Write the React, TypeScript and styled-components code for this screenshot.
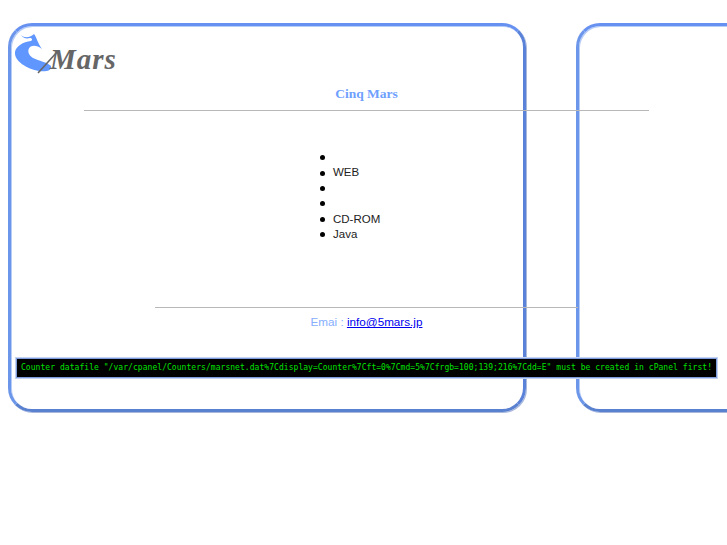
import React from 'react';
import styled, { createGlobalStyle } from 'styled-components';

const GlobalStyle = createGlobalStyle`
  html, body {
    margin: 0;
    background: #fff;
    overflow: hidden;
  }
`;

const Stage = styled.div`
  display: grid;
  grid-template-columns: 733px;
  width: 727px;
  height: 545px;
  overflow: hidden;
`;

const PanelRow = styled.div`
  grid-area: 1 / 1;
  display: flex;
  gap: 50px;
  padding: 23px 0 0 8px;
  min-width: 0;
`;

const Panel = styled.div`
  box-sizing: border-box;
  width: 518px;
  height: 389px;
  flex: none;
  padding: 3px 0 0 2px;
  border-style: solid;
  border-width: 3px;
  border-color: #6791f0 #5a82d8 #5a80d0 #6c96ea;
  border-radius: 24px;
  box-shadow: inset 1px 1px 0 #b6cdf8, 1px 1px 0 #a9b9dc;
`;

const Logo = styled.svg`
  display: block;
  width: 110px;
  height: 50px;
`;

const LogoText = styled.text`
  font-family: 'Liberation Serif', serif;
  font-style: italic;
  font-weight: 700;
  font-size: 29px;
  letter-spacing: 1px;
  fill: #666;
`;

const Content = styled.div`
  grid-area: 1 / 1;
  display: flex;
  flex-direction: column;
  align-items: center;
  padding-top: 86px;
  font-family: 'Liberation Sans', Arial, sans-serif;
`;

const Title = styled.h1`
  margin: 0;
  font-family: 'Liberation Serif', serif;
  font-size: 13.5px;
  line-height: 16px;
  font-weight: 700;
  color: #6f9fff;
`;

const Rule = styled.hr<{ $width: number }>`
  box-sizing: border-box;
  width: ${(p) => p.$width}px;
  height: 1px;
  margin: 0;
  border: 0;
  background: #b8b8b8;
`;

const TopRule = styled(Rule)`
  margin-top: 8px;
`;

const BottomRule = styled(Rule)`
  margin-top: 65px;
`;

const MenuList = styled.ul`
  box-sizing: border-box;
  width: 93px;
  margin: 39px 0 0;
  padding: 0;
  list-style: none;
  font-size: 11.5px;
  line-height: 15.4px;
  color: #222;
`;

const MenuItem = styled.li`
  display: flex;
  align-items: center;
  gap: 8px;
  height: 15.4px;

  &::before {
    content: '';
    flex: none;
    width: 5px;
    height: 5px;
    border-radius: 50%;
    background: #000;
  }
`;

const Contact = styled.p`
  margin: 6px 0 0;
  font-size: 11.7px;
  line-height: 15px;
  color: #85aeff;
`;

const MailLink = styled.a`
  color: #0000ee;
`;

const CounterBar = styled.div`
  box-sizing: border-box;
  width: 703px;
  height: 22px;
  margin-top: 28px;
  padding: 0 4px;
  border: 2px solid #7f9cdc;
  outline: 1px solid #c5d3f2;
  outline-offset: -1px;
  background: #000;
  color: #00e000;
  font-family: 'DejaVu Sans Mono', monospace;
  font-size: 8px;
  letter-spacing: 0.05px;
  line-height: 18px;
  white-space: nowrap;
  overflow: hidden;
`;

const menuItems = ['', 'WEB', '', '', 'CD-ROM', 'Java'];

const counterMessage =
  'Counter datafile "/var/cpanel/Counters/marsnet.dat%7Cdisplay=Counter%7Cft=0%7Cmd=5%7Cfrgb=100;139;216%7Cdd=E" must be created in cPanel first!';

export default function App() {
  return (
    <Stage>
      <GlobalStyle />
      <PanelRow>
        <Panel>
          <Logo viewBox="12 28 110 50">
            <path
              d="M20 34 C24 38 30 36 33 33 C36 37 37 43 41 48 C36 44 32 44 29 46 C26 49 27 54 32 57 C38 60 46 61 50 65 C51 70 44 71 38 70 C26 68 13 60 14 51 C15 45 22 41 30 40 C32 39 31 37 29 37 C25 38 22 37 20 34 Z"
              fill="#5f96ff"
            />
            <path d="M37 72 L57 50" stroke="#666" strokeWidth="1.6" fill="none" />
            <LogoText x="49" y="68">
              Mars
            </LogoText>
          </Logo>
        </Panel>
        <Panel />
      </PanelRow>
      <Content>
        <Title>Cinq Mars</Title>
        <TopRule $width={565} />
        <MenuList>
          {menuItems.map((item, i) => (
            <MenuItem key={i}>{item}</MenuItem>
          ))}
        </MenuList>
        <BottomRule $width={423} />
        <Contact>
          Emai : <MailLink href="#">info@5mars.jp</MailLink>
        </Contact>
        <CounterBar>{counterMessage}</CounterBar>
      </Content>
    </Stage>
  );
}
